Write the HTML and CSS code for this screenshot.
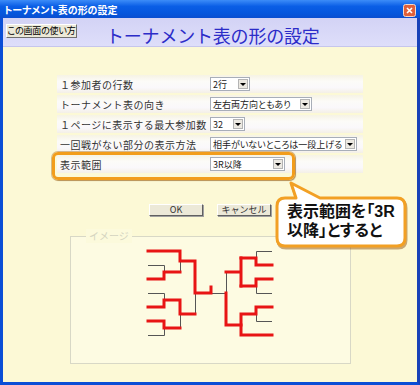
FILE: index.html
```html
<!DOCTYPE html>
<html lang="ja">
<head>
    <meta charset="UTF-8">
    <title>トーナメント表の形の設定</title>
    <link rel="stylesheet" href="styles.css">
</head>
<body>
    <div class="window">
        <div class="titlebar">
            <span class="title">トーナメント表の形の設定</span>
            <svg class="close" width="13" height="13" viewBox="0 0 13 13">
                <rect x="0.5" y="0.5" width="12" height="12" rx="2" fill="#e0603a" stroke="#f4d8c8"/>
                <path d="M4 4 L9 9 M9 4 L4 9" stroke="#fff" stroke-width="1.6"/>
            </svg>
        </div>
        <div class="frame">
            <div class="header">
                <button class="help">この画面の使い方</button>
                <h1>トーナメント表の形の設定</h1>
            </div>
            <div class="content">
                <div class="rows">
                    <div class="row">
                        <span class="label">１参加者の行数</span>
                        <span class="select w-lines">2行<i class="arrow"></i></span>
                    </div>
                    <div class="row">
                        <span class="label">トーナメント表の向き</span>
                        <span class="select w-dir">左右両方向ともあり<i class="arrow"></i></span>
                    </div>
                    <div class="row">
                        <span class="label">１ページに表示する最大参加数</span>
                        <span class="select w-max">32<i class="arrow"></i></span>
                    </div>
                    <div class="row">
                        <span class="label">一回戦がない部分の表示方法</span>
                        <span class="select w-bye">相手がいないところは一段上げる<i class="arrow"></i></span>
                    </div>
                    <div class="row current">
                        <span class="label">表示範囲</span>
                        <span class="select w-range">3R以降<i class="arrow"></i></span>
                    </div>
                </div>
                <div class="actions">
                    <button class="btn">OK</button>
                    <button class="btn">キャンセル</button>
                </div>
                <div class="image-box">
                    <span class="legend">イメージ</span>
                    <svg class="bracket" width="140" height="100" viewBox="140 245 140 100">
                        <g fill="none" stroke="#555" stroke-width="1">
                            <path d="M148 266.5 H164.5 V273 M148 294.5 H164.5 V301 M148 336.5 H164.5 V329"/>
                            <path d="M180.5 262 V273 M180.5 315 V329 M195.5 294 V315 M211 294.5 H226.5 V273"/>
                            <path d="M272 252.5 H256.5 V259 M272 294.5 H256.5 V287 M272 322.5 H256.5 V315"/>
                        </g>
                        <g fill="none" stroke="#e81414" stroke-width="3" stroke-linecap="square">
                            <path d="M148 252 H180 V262 H195 V294 H211 V288"/>
                            <path d="M148 280 H164 V273 H180"/>
                            <path d="M148 308 H164 V301 H180 V315 H195"/>
                            <path d="M148 322 H164 V329 H180"/>
                            <path d="M226 294 V326 H241 M226 273 H241 M241 259 V287"/>
                            <path d="M241 259 H256 V266 H272 M241 287 H256 V280 H272"/>
                            <path d="M241 315 V336 H272 M241 315 H256 V308 H272"/>
                        </g>
                    </svg>
                </div>
            </div>
        </div>
        <div class="callout">
            <svg width="144" height="76" viewBox="268 176 144 76">
                <path d="M291 183 L320 198 H397 Q405 198 405 206 V238 Q405 246 397 246 H285 Q277 246 277 238 V206 Q277 198 285 198 H296 Z" fill="#fff" stroke="#f2a024" stroke-width="3" stroke-linejoin="round"/>
            </svg>
            <div class="callout-text">
                <div>表示範囲を「3R</div>
                <div>以降」とすると</div>
            </div>
        </div>
    </div>
</body>
</html>
```

FILE: styles.css
```css
body {
    margin: 0;
    font-family: "Noto Sans CJK JP", "Noto Sans", sans-serif;
}
.window {
    position: relative;
    width: 420px;
    height: 385px;
    display: flex;
    flex-direction: column;
}
.titlebar {
    height: 18px;
    flex: none;
    display: flex;
    justify-content: space-between;
    align-items: flex-start;
    background: linear-gradient(#3c8cf8, #0a5ee6 35%, #0656dc 75%, #0a4ed0);
}
.title {
    color: white;
    font-size: 10px;
    font-weight: bold;
    line-height: 14px;
    padding: 3px 0 0 4px;
    font-feature-settings: "palt";
}
.close {
    margin: 4px 4px 0 0;
}
.frame {
    flex: 1;
    display: flex;
    flex-direction: column;
    background-color: #fcf9d6;
    border: 3px solid #0b4ed6;
    border-top: 0;
    border-right-color: #1842b8;
}
.header {
    height: 29px;
    flex: none;
    display: flex;
    align-items: flex-start;
    padding-top: 6px;
    box-sizing: border-box;
    background: linear-gradient(#d3d3f5, #dedefa);
    border-bottom: 1px solid #c6c6ec;
}
.help {
    margin-left: 3px;
    width: 71px;
    height: 14px;
    padding: 0;
    overflow: hidden;
    white-space: nowrap;
    font-family: inherit;
    font-size: 9px;
    line-height: 12px;
    letter-spacing: -0.2px;
    color: black;
    background-color: #ece9d8;
    border: 1px solid;
    border-color: #ffffff #707070 #707070 #ffffff;
    font-feature-settings: "palt";
}
h1 {
    margin: 2px 0 0 29px;
    font-size: 18px;
    line-height: 18px;
    font-weight: normal;
    color: #2c2cc8;
    letter-spacing: -0.2px;
}
.content {
    padding-top: 28px;
}
.rows {
    margin-left: 54px;
    width: 306px;
    display: flex;
    flex-direction: column;
    gap: 2px;
}
.row {
    position: relative;
    height: 18px;
    display: flex;
    align-items: center;
    background: linear-gradient(#f6f3e4, #fcfbf8 35%, #faf8fb 70%, #f4f0e6);
}
.label {
    width: 150px;
    padding-left: 3px;
    font-size: 10px;
    letter-spacing: 0.5px;
    color: #333;
    white-space: nowrap;
}
.select {
    height: 14px;
    box-sizing: border-box;
    display: flex;
    align-items: center;
    justify-content: space-between;
    padding: 0 1px 0 2px;
    overflow: hidden;
    background-color: white;
    border: 1px solid #a8aeb8;
    font-size: 9px;
    color: #222;
    white-space: nowrap;
    font-feature-settings: "palt";
}
.w-lines { width: 40px; }
.w-dir { width: 102px; }
.w-max { width: 35px; }
.w-bye { width: 147px; }
.w-range { width: 75px; }
.arrow {
    width: 10px;
    height: 10px;
    flex: none;
    box-sizing: border-box;
    display: flex;
    justify-content: center;
    align-items: center;
    background-color: #ece9e2;
    border: 1px solid #b4b4b4;
}
.arrow::after {
    content: "";
    border-top: 3px solid #000;
    border-left: 3px solid transparent;
    border-right: 3px solid transparent;
}
.current::after {
    content: "";
    position: absolute;
    left: -5px;
    top: -3px;
    width: 243px;
    height: 28px;
    box-sizing: border-box;
    border: 3px solid #f29d1b;
    border-radius: 6px;
    box-shadow: 0 0 0 1px rgba(170, 110, 30, 0.45), 1px 1px 1px rgba(120, 80, 20, 0.4);
}
.actions {
    margin-top: 31px;
    padding-left: 146px;
    display: flex;
    gap: 14px;
}
.btn {
    width: 54px;
    height: 12px;
    padding: 0;
    font-family: inherit;
    font-size: 9px;
    line-height: 10px;
    color: #333;
    background-color: #ece9d8;
    border: 1px solid;
    border-color: #ffffff #606060 #606060 #ffffff;
    box-shadow: 1px 1px 0 #a0a0a0;
}
.image-box {
    position: relative;
    margin: 20px 0 0 67px;
    width: 281px;
    height: 128px;
    box-sizing: border-box;
    background-color: #fdfbe2;
    border: 1px solid #d8d8c6;
}
.legend {
    position: absolute;
    top: -8px;
    left: 15px;
    padding: 0 3px;
    font-size: 10px;
    line-height: 14px;
    color: #d4d4c0;
    background-color: #fcfadc;
}
.bracket {
    display: block;
    margin: 7px 0 0 69px;
}
.callout {
    position: absolute;
    left: 268px;
    top: 176px;
    width: 144px;
    height: 76px;
}
.callout svg {
    display: block;
    filter: drop-shadow(1px 2px 0 rgba(160, 100, 30, 0.55));
}
.callout-text {
    position: absolute;
    left: 19px;
    top: 26px;
    font-family: "Liberation Sans", "Noto Sans CJK JP", sans-serif;
    font-size: 16px;
    line-height: 19px;
    font-weight: bold;
    color: #111;
    font-feature-settings: "palt";
    white-space: nowrap;
}
```
